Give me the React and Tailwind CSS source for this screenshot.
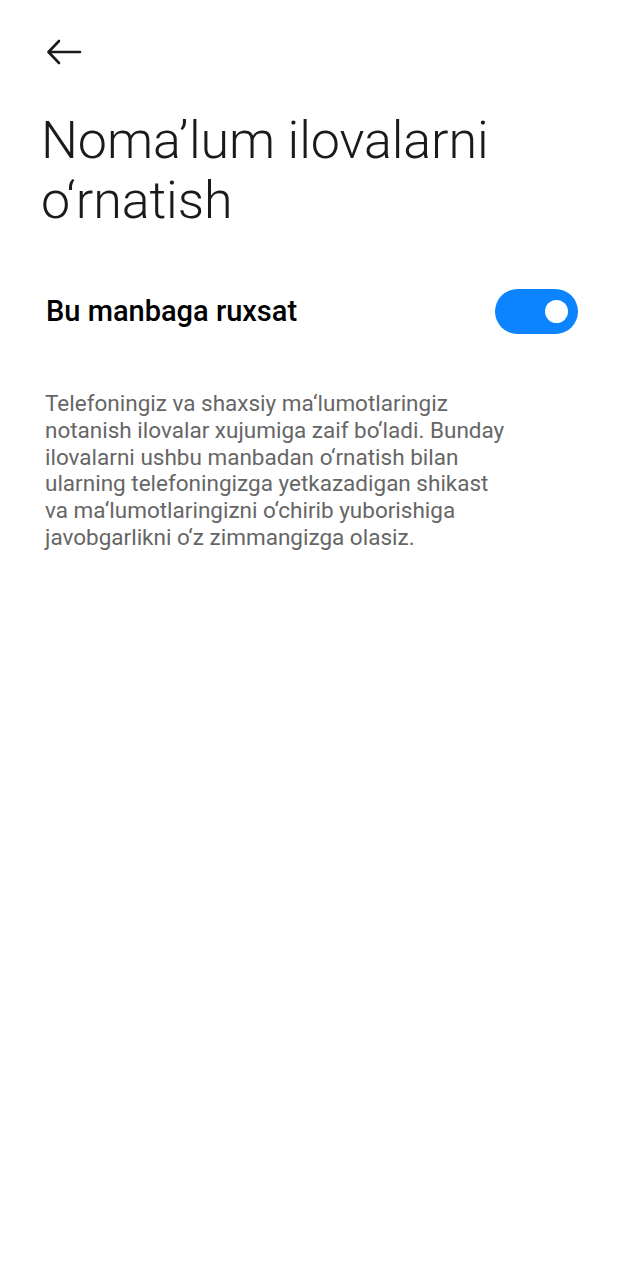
import { useState } from 'react';

export default function App() {
  const [allowed, setAllowed] = useState(true);

  return (
    <div className="min-h-screen w-full bg-white font-['Roboto',sans-serif]">
      {/* Top bar */}
      <div className="h-[111px] pl-[46px] pt-[38px]">
        <button className="text-[#1a1a1a]">
          <svg width="36" height="28" viewBox="0 0 36 28" fill="none" stroke="currentColor" strokeWidth="2.6" strokeLinecap="round" strokeLinejoin="round">
            <path d="M34 14H3" />
            <path d="M13 3L2.5 14L13 25" />
          </svg>
        </button>
      </div>

      {/* Title */}
      <h1 className="px-[41px] text-[52px] font-light leading-[60px] text-[#1a1a1a] tracking-[-0.1px]">
        Noma’lum ilovalarni o‘rnatish
      </h1>

      {/* Toggle row */}
      <div className="mt-[58px] flex items-center justify-between pl-[46px] pr-[47px]">
        <span className="text-[29px] font-medium text-black">Bu manbaga ruxsat</span>
        <button
          onClick={() => setAllowed(!allowed)}
          className={`flex h-[45px] w-[83px] items-center rounded-full px-[10px] ${allowed ? 'justify-end bg-[#0d84ff]' : 'justify-start bg-[#d9d9d9]'}`}
        >
          <span className="h-[23px] w-[23px] rounded-full bg-white" />
        </button>
      </div>

      {/* Description */}
      <p className="mt-[56px] pl-[45px] pr-[114px] text-[22.5px] leading-[26.8px] text-[#666666]">
        Telefoningiz va shaxsiy ma‘lumotlaringiz notanish ilovalar xujumiga zaif bo‘ladi. Bunday ilovalarni ushbu manbadan o‘rnatish bilan ularning telefoningizga yetkazadigan shikast va ma‘lumotlaringizni o‘chirib yuborishiga javobgarlikni o‘z zimmangizga olasiz.
      </p>
    </div>
  );
}
